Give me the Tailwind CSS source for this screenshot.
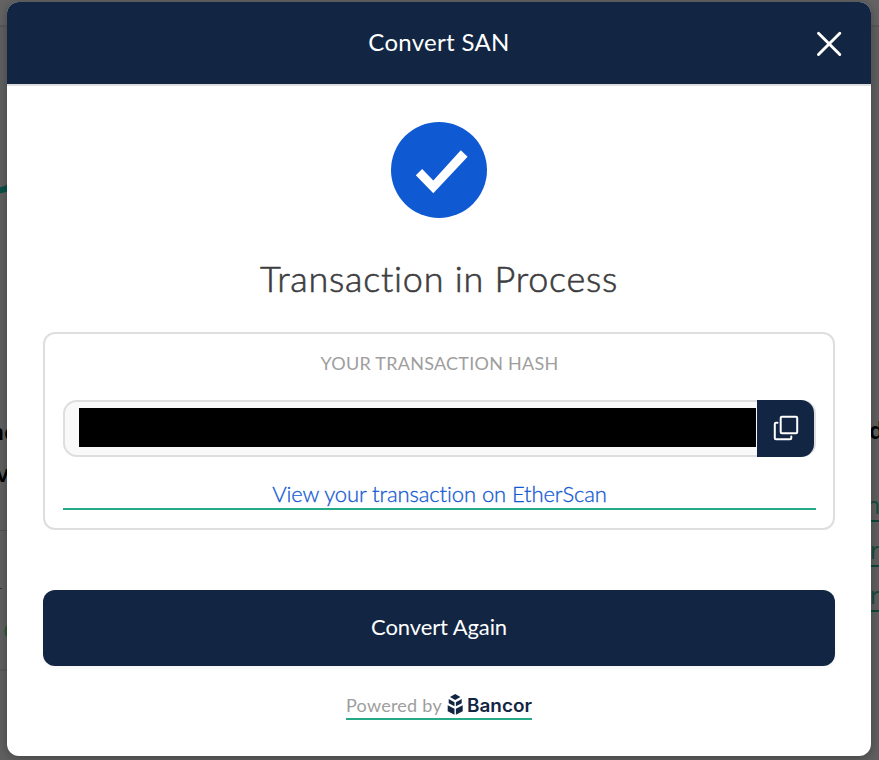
<!DOCTYPE html>
<html lang="en">
<head>
<meta charset="utf-8">
<title>Convert SAN</title>
<script src="https://cdn.jsdelivr.net/npm/@tailwindcss/browser@4"></script>
</head>
<body class="relative h-[760px] w-[879px] overflow-hidden bg-[#606060] font-['Lato',sans-serif] [font-variant-ligatures:none]">
<!-- dimmed page behind the dialog -->
<div aria-hidden="true" class="absolute inset-0 overflow-hidden">
  <div class="absolute inset-x-0 top-0 h-[27px] border-b-2 border-[#595959] bg-[#646464]"></div>
  <svg class="absolute left-0 top-0" width="12" height="760" viewBox="0 0 12 760" fill="none">
    <path d="M-4 190.500Q4 191 10 186" stroke="#0b4f49" stroke-width="6"/>
    <path d="M0 530.500H12M0 670H12" stroke="#515151"/>
    <path d="M0 588.500H2" stroke="#333"/>
    <circle cx="14" cy="631" r="8.500" stroke="#2d5930" stroke-width="2"/>
  </svg>
  <span class="absolute -left-[10px] top-[416px] font-['Noto_Sans'] text-[22px] font-semibold leading-[30px] text-black">ne</span>
  <span class="absolute -left-[4px] top-[458px] font-['Noto_Sans'] text-[24px] font-semibold leading-[30px] text-black">v</span>
  <span class="absolute left-[869px] top-[415px] font-['Noto_Sans'] text-[23px] font-semibold leading-[30px] text-black">d</span>
  <span class="absolute left-[866px] top-[490px] h-[32px] border-b-2 border-[#0e463a] font-['Noto_Sans'] text-[23px] leading-[30px] text-[#164c40]">nk</span>
  <span class="absolute left-[870px] top-[535px] h-[32px] border-b-2 border-[#0e463a] font-['Noto_Sans'] text-[23px] leading-[30px] text-[#164c40]">re</span>
  <span class="absolute left-[870px] top-[580px] h-[32px] border-b-2 border-[#0e463a] font-['Noto_Sans'] text-[23px] leading-[30px] text-[#164c40]">re</span>
</div>

<main class="relative ml-[7px] mt-[2px] h-[754px] w-[864px] overflow-hidden rounded-[12px] bg-white shadow-[0_2px_12px_rgba(0,0,0,0.3)]">
  <header class="grid h-[84px] grid-cols-[1fr_auto_1fr] items-center border-b-2 border-[#dedede] bg-[#122644] px-[28px]">
    <h1 class="col-start-2 mb-[2px] whitespace-nowrap text-[24px] leading-[32px] tracking-[0.3px] text-white">Convert SAN</h1>
    <button aria-label="Close" class="mt-[1px] justify-self-end">
      <svg width="28" height="28" viewBox="0 0 28 28" fill="none" stroke="white" stroke-width="2.900" stroke-linecap="round"><path d="M3.500 3.200L24.800 24.500M24.800 3.200L3.500 24.500"/></svg>
    </button>
  </header>
  <div class="flex flex-col items-center px-[36px] pt-[36px]">
    <svg width="96" height="96" viewBox="0 0 96 96"><circle cx="48" cy="48" r="48" fill="#0f59d2"/><path d="M24.800 53.300L31.200 46.900L42.300 58.500L69.800 28.300L76.600 34.700L42.300 71.300Z" fill="white"/></svg>
    <h2 class="mt-[36px] whitespace-nowrap text-[36px] font-light leading-[48px] tracking-[0.75px] text-[#3d3d3f] [-webkit-text-stroke:0.6px_#3d3d3f]">Transaction in Process</h2>
    <section class="mt-[30px] h-[198px] w-full rounded-[12px] border-2 border-[#dedede] pt-[17px] pl-[18px] pr-[17px] text-center">
      <div class="text-[18px] leading-[24px] tracking-[0.25px] text-[#9e9e9e]"><span>YOUR TRANSACTION HASH</span></div>
      <div class="mt-[25px] flex h-[57px] rounded-[14px] bg-[#f9f9f9] pr-[2px] shadow-[inset_0_0_0_2px_#dedede]">
        <div class="ml-[16px] mt-[8px] h-[39px] w-[677px] bg-black"></div>
        <button aria-label="Copy" class="ml-px flex h-[57px] w-[57px] items-center justify-center rounded-r-[13px] bg-[#122644] pb-[2px]">
          <svg width="26" height="26" viewBox="0 0 26 26" fill="none" stroke="white" stroke-width="2" stroke-linecap="round"><rect x="7.700" y="1.800" width="16.500" height="16.500" rx="1.200"/><path d="M4.500 7.700H3Q1.800 7.700 1.800 9V23Q1.800 24.200 3 24.200H17Q18.300 24.200 18.300 23V21.500"/></svg>
        </button>
      </div>
      <a class="mt-[23px] block h-[30px] border-b-2 border-[#26a987] text-[22px] font-light leading-[28px] tracking-[-0.1px] text-[#1259d2] [-webkit-text-stroke:0.3px_#1259d2]"><span>View your transaction on EtherScan</span></a>
    </section>
    <button class="mt-[60px] h-[76px] w-full rounded-[12px] bg-[#122644] pb-[2px] text-[22px] leading-[28px] tracking-[-0.1px] text-white shadow-[0_2px_4px_rgba(0,0,0,0.04)]"><span>Convert Again</span></button>
    <a class="mt-[27px] flex h-[27px] w-[186px] items-start border-b-2 border-[#26a987]">
      <span class="whitespace-nowrap text-[18px] leading-[25px] tracking-[0.25px] text-[#9e9e9e]">Powered by</span>
      <svg class="ml-auto shrink-0" width="85" height="25" viewBox="0 0 85 25">
        <g fill="#122644" transform="translate(.7)"><path d="M7.500 1L12.700 4L7.500 7L2.300 4ZM1 6L6.800 9.200V13.300L1 10.200ZM14 6L8.200 9.200V13.300L14 10.200ZM0 12.200L6.800 15.800V21.800L0 18.300ZM15 12.200L8.200 15.800V21.800L15 18.300Z"/></g>
        <text x="20" y="19" textLength="65" lengthAdjust="spacingAndGlyphs" font-family="Inter" font-weight="600" font-size="18" fill="#122644">Bancor</text>
      </svg>
    </a>
  </div>
</main>
</body>
</html>
